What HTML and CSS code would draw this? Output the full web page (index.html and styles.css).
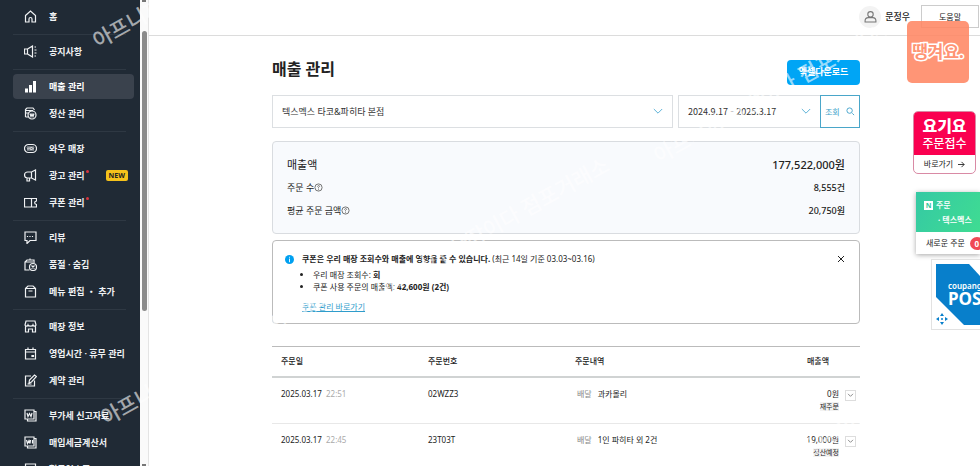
FILE: index.html
```html
<!DOCTYPE html>
<html lang="ko">
<head>
<meta charset="utf-8">
<meta name="viewport" content="width=device-width, initial-scale=1">
<title>매출 관리</title>
<link rel="stylesheet" href="styles.css">
</head>
<body>
<div class="app">
  <nav class="sidebar">
    <a class="item" href="#"><svg viewBox="0 0 26 26"><path d="M3 11 13 2l10 9v13h-7v-6a3 3 0 0 0-6 0v6H3z"/></svg>홈</a>
    <hr>
    <a class="item" href="#"><svg viewBox="0 0 26 26"><path d="M1 8h6v10H1zM7 8l10-6v22L7 18M21 4h3M21 10h4M21 16h4M21 22h3"/></svg>공지사항</a>
    <hr>
    <a class="item active" href="#"><svg viewBox="0 0 26 26"><path class="solid" d="M2 17h6v8H2zM10 10h6v15h-6zM18 2h6v23h-6z"/></svg>매출 관리</a>
    <a class="item" href="#"><svg viewBox="0 0 26 26"><path d="M3 20V5l3-3h12l3 4M3 7h15M3 12h6M3 20h5"/><circle cx="16" cy="16" r="8"/><path d="m12 13 2 6 2-5 2 5 2-6"/></svg>정산 관리</a>
    <hr>
    <a class="item" href="#"><svg viewBox="0 0 26 26"><rect x="1" y="5" width="24" height="16" rx="8"/><path d="M6 10h14M6 16h14M6 11l2 4 2-4 2 4M13 11h3v4h-3zM17 11l1 4 2-4" stroke-width="1.4"/></svg>와우 매장</a>
    <a class="item" href="#"><svg viewBox="0 0 26 26"><path d="M15 6H7a6 6 0 0 0 0 12h8l8 4V2zM15 6v12M6 18v6h5v-6"/></svg>광고 관리<i class="dot"></i><span class="new">NEW</span></a>
    <a class="item" href="#"><svg viewBox="0 0 26 26"><path d="M1 5h24v5c-5 1-5 6 0 7v5H1zM15 5v17"/></svg>쿠폰 관리<i class="dot"></i></a>
    <hr>
    <a class="item" href="#"><svg viewBox="0 0 26 26"><path d="M2 2h22v17H12l-6 6v-6H2zM7 10v2M12 10v2M17 10v2"/></svg>리뷰</a>
    <a class="item" href="#"><svg viewBox="0 0 26 26"><path d="M11 24H2V8l4-4h14v6M2 8h16M12 4V1"/><circle cx="18" cy="18" r="7"/><path d="m15 15 6 6M21 15l-6 6"/></svg>품절 · 숨김</a>
    <a class="item" href="#"><svg viewBox="0 0 26 26"><path d="M3 7h20v17H3zM3 7l5-5h10l5 5M9 12h8"/></svg>메뉴 편집 ・ 추가</a>
    <hr>
    <a class="item" href="#"><svg viewBox="0 0 26 26"><path d="M4 2h18l2 8c-1 3-5 3-6 0-1 3-9 3-10 0-1 3-5 3-6 0zM3 13v11h6v-6h8v6h6V13"/></svg>매장 정보</a>
    <a class="item" href="#"><svg viewBox="0 0 26 26"><path d="M3 5h20v19H3zM3 10h20M8 1v5M18 1v5M16 17h3v2h-3z"/></svg>영업시간 · 휴무 관리</a>
    <a class="item" href="#"><svg viewBox="0 0 26 26"><path d="M14 4H3v20h18V13M10 18l1-6L21 2l4 3-10 11zM7 20h8"/></svg>계약 관리</a>
    <hr>
    <a class="item" href="#"><svg viewBox="0 0 26 26"><path d="M2 2h18v18H2zM20 5h4v19H7v-4M6 8l2 7 3-6 3 6 2-7"/></svg>부가세 신고자료</a>
    <a class="item" href="#"><svg viewBox="0 0 26 26"><path d="M2 2h18v18H2zM20 5h4v19H7v-4M5 8l2 7 3-6 2 6 1-7M17 8v7"/></svg>매입세금계산서</a>
    <a class="item" href="#"><svg viewBox="0 0 26 26"><path d="M3 2h20v22H3z"/></svg>현금영수증</a>
  </nav>
  <div class="scrollbar"><i></i><div class="thumb"></div><i></i></div>
  <div class="page">
    <header class="topbar">
      <span class="avatar"><svg viewBox="0 0 24 24"><circle cx="12" cy="8" r="5"/><path d="M2 22v-2c0-4 3-6 6-6h8c3 0 6 2 6 6v2z"/></svg></span>
      <span class="user">문정우</span>
      <button class="help">도움말</button>
    </header>
    <main>
      <div class="heading">
        <h1>매출 관리</h1>
        <button class="excel">엑셀다운로드</button>
      </div>
      <form class="filters">
        <label class="pick store"><select aria-label="매장"><option>텍스멕스 타코&amp;파히타 본점</option></select><svg viewBox="0 0 12 8"><path d="m1 1 5 5 5-5"/></svg></label>
        <label class="pick period"><select aria-label="조회 기간"><option>2024.9.17 - 2025.3.17</option></select><svg viewBox="0 0 12 8"><path d="m1 1 5 5 5-5"/></svg></label>
        <button class="search" type="button">조회<svg viewBox="0 0 10 10"><circle cx="4" cy="4" r="3"/><path d="m7 7 2 2"/></svg></button>
      </form>
      <section class="summary">
        <div class="line total"><span>매출액</span><strong>177,522,000원</strong></div>
        <div class="line"><span>주문 수<svg viewBox="0 0 10 10"><circle cx="5" cy="5" r="4"/><path d="M4 4c0-2 3-1 2 0L5 5v1M5 7v1"/></svg></span><strong>8,555건</strong></div>
        <div class="line"><span>평균 주문 금액<svg viewBox="0 0 10 10"><circle cx="5" cy="5" r="4"/><path d="M4 4c0-2 3-1 2 0L5 5v1M5 7v1"/></svg></span><strong>20,750원</strong></div>
      </section>
      <section class="notice">
        <svg class="info" viewBox="0 0 10 10"><circle cx="5" cy="5" r="5"/><path d="M5 2v1M5 4v4"/></svg>
        <div class="message">
          <p><b>쿠폰은 우리 매장 조회수와 매출에 영향을 줄 수 있습니다.</b> (최근 14일 기준 03.03~03.16)</p>
          <ul>
            <li>우리 매장 조회수: <b>회</b></li>
            <li>쿠폰 사용 주문의 매출액: <b>42,600원 (2건)</b></li>
          </ul>
          <a href="#">쿠폰 관리 바로가기</a>
        </div>
        <button class="close" aria-label="닫기"><svg viewBox="0 0 8 8"><path d="m1 1 6 6M7 1 1 7"/></svg></button>
      </section>
      <table class="orders">
        <thead><tr><th class="c1">주문일</th><th class="c2">주문번호</th><th class="c3">주문내역</th><th class="c4">매출액</th></tr></thead>
        <tbody>
          <tr><td>2025.03.17 <span class="time">22:51</span></td><td>02WZZ3</td><td><span class="kind">배달</span>과카몰리</td>
            <td><div class="amount"><div>0원<br><span class="tag">재주문</span></div><button class="expand" aria-label="펼치기"><svg viewBox="0 0 8 6"><path d="m1 1 3 3 3-3"/></svg></button></div></td></tr>
          <tr><td>2025.03.17 <span class="time">22:45</span></td><td>23T03T</td><td><span class="kind">배달</span>1인 파히타 외 2건</td>
            <td><div class="amount"><div>19,000원<br><span class="tag">정산예정</span></div><button class="expand" aria-label="펼치기"><svg viewBox="0 0 8 6"><path d="m1 1 3 3 3-3"/></svg></button></div></td></tr>
        </tbody>
      </table>
    </main>
  </div>
  <div class="mark m1">아프니까 사장이다 점포거래소</div>
  <div class="mark m2">아프니까 사장이다 점포거래소</div>
  <div class="mark m3">아프니까 사장이다 점포거래소</div>
  <div class="mark m4">아프니까 사장이다 점포거래소</div>
  <div class="mark m5">아프니까 사장이다 점포거래소</div>
  <a class="widget ddang" href="#">땡겨요.</a>
  <a class="widget yogiyo" href="#"><span class="top"><b>요기요</b><span>주문접수</span></span><span class="go">바로가기 <svg viewBox="0 0 8 8"><path d="M0 4h7M4 1l3 3-3 3"/></svg></span></a>
  <a class="widget naver" href="#"><span class="top"><span class="brand"><i>N</i>주문</span><span class="shop">· 텍스멕스</span></span><span class="fresh">새로운 주문<em>0</em></span></a>
  <a class="widget coupang" href="#"><span class="pos"><small>coupang</small><b>POS</b></span><svg class="move" viewBox="0 0 12 12"><path d="m6 0 2 3H4zM6 12l2-3H4zM0 6l3-2v4zM12 6 9 4v4z"/><circle cx="6" cy="6" r="1"/></svg></a>
</div>
</body>
</html>
```
FILE: styles.css
```css
* { box-sizing: border-box; }
body {
  margin: 0;
  font: 8px/12px "Noto Sans", "Noto Sans CJK KR", sans-serif;
  color: #222;
  background: #fff;
}
a { color: inherit; text-decoration: none; }
button, select { font: inherit; color: inherit; background: none; border: 0; padding: 0; }
svg { fill: none; stroke: currentColor; flex: none; }
.app { position: relative; display: flex; height: 100vh; overflow: hidden; }

.sidebar {
  width: 140px;
  flex: none;
  display: flex;
  flex-direction: column;
  gap: 2px;
  padding: 4px 6px 0 13px;
  overflow: hidden;
  background: #202a35;
  color: #f0f2f4;
}
.item {
  flex: none;
  display: flex;
  align-items: center;
  height: 25px;
  padding: 0 6px 0 11px;
  border-radius: 4px;
  font-size: 9px;
  font-weight: 600;
  white-space: nowrap;
}
.item svg { width: 13px; height: 13px; margin-right: 12px; stroke-width: 2.4; }
.item .solid { fill: #fff; stroke: none; }
.item.active { background: #3a424d; font-weight: 700; color: #fff; }
.sidebar hr { flex: none; width: 113px; height: 1px; margin: 3px 0 2px; border: 0; background: #2e3843; }
.dot { width: 3px; height: 3px; margin: 0 0 9px 2px; border-radius: 50%; background: #d8353f; }
.new {
  margin-left: auto;
  padding: 0 3px;
  border-radius: 2px;
  background: #f5c21b;
  color: #222;
  font-size: 7px;
  line-height: 11px;
  font-weight: 700;
}

.scrollbar {
  display: flex;
  flex-direction: column;
  align-items: center;
  justify-content: space-between;
  width: 9px;
  flex: none;
  background: #fafafa;
  border-right: 1px solid #e4e4e4;
}
.scrollbar i { width: 4px; height: 2px; background: #777; }
.thumb { width: 5px; height: 60%; margin-bottom: 124px; border-radius: 3px; background: #8b8b8b; }

.page { flex: 1; min-width: 0; }
.topbar {
  display: flex;
  align-items: center;
  justify-content: flex-end;
  height: 36px;
  padding: 0 1px 2px 0;
  border-bottom: 1px solid #dcdcdc;
}
.avatar { display: flex; align-items: center; justify-content: center; width: 22px; height: 22px; border-radius: 50%; background: #f3f3f3; color: #777; }
.avatar svg { width: 13px; height: 13px; stroke-width: 2; }
.user { margin: 0 11px 0 4px; font-size: 9px; font-weight: 500; }
.help { width: 58px; height: 23px; border: 1px solid #ccc; }

main { padding: 19px 120px 0 123px; }
.heading { display: flex; justify-content: space-between; align-items: center; margin-bottom: 10px; padding-top: 4px; }
h1 { margin: 0 0 6px; font-size: 16px; line-height: 20px; font-weight: 700; }
.excel { width: 73px; height: 25px; border-radius: 4px; background: #00a5f5; color: #fff; font-size: 9px; font-weight: 700; }

.filters { display: flex; height: 33px; }
.pick { display: flex; align-items: center; min-width: 0; border: 1px solid #dcdfe2; padding: 0 9px; color: #3fa3cf; }
.pick select { flex: 1; min-width: 0; appearance: none; color: #333; font-size: 9px; }
.pick svg { width: 10px; height: 7px; }
.store { flex: 1; margin-right: 5px; }
.period { width: 142px; border-right: 0; }
.period select { font-family: "Noto Sans CJK KR", sans-serif; }
.search { display: flex; align-items: center; justify-content: space-between; width: 40px; padding: 0 4px; border: 1px solid #4aa6c9; color: #3b9fc9; }
.search svg { width: 9px; height: 9px; }

.summary { margin-top: 13px; padding: 11px 14px; border: 1px solid #d9dce0; border-radius: 4px; background: #f8fafd; }
.line { display: flex; justify-content: space-between; align-items: center; height: 23px; font-size: 9px; }
.line > span { display: flex; align-items: center; }
.line strong { font-weight: 500; }
.line svg { width: 9px; height: 9px; color: #666; stroke-width: 1; }
.total { font-size: 11px; }
.total strong { font-size: 11px; }

.notice { display: flex; align-items: flex-start; margin-top: 6px; padding: 12px 14px 10px 12px; border: 1px solid #bbb; border-radius: 4px; }
.info { width: 9px; height: 9px; margin-top: 2px; fill: #00a0f0; stroke: none; }
.info path { stroke: #fff; }
.message { flex: 1; margin-left: 8px; }
.message p { margin: 0 0 4px; }
.message ul { margin: 0 0 8px; padding-left: 11px; }
.message a { color: #2f9ccb; text-decoration: underline; }
.close { width: 8px; height: 14px; }
.close svg { width: 8px; height: 8px; color: #222; }

.orders { width: 100%; margin-top: 22px; border-collapse: collapse; table-layout: fixed; border-top: 1px solid #bbb; }
.orders th { height: 30px; padding: 0 0 0 9px; text-align: left; font-weight: 500; border-bottom: 2px solid #d0d3d3; }
.orders td { height: 47px; padding: 10px 0 0 9px; vertical-align: top; border-bottom: 1px solid #e8e8e8; }
.orders .c1, .orders .c2 { width: 25%; }
.orders .c4 { width: 12%; padding-right: 31px; text-align: right; }
.time { margin-left: 2px; color: #aaa; }
.kind { margin: 0 6px 0 2px; color: #888; }
.amount { display: flex; justify-content: flex-end; gap: 6px; padding-right: 4px; text-align: right; white-space: nowrap; }
.tag { background: #f2f2f2; font-size: 7px; }
.expand { width: 11px; height: 11px; margin-top: 2px; border: 1px solid #ddd; display: flex; align-items: center; justify-content: center; color: #777; }
.expand svg { width: 7px; height: 5px; }

.mark {
  position: absolute;
  z-index: 1;
  color: rgba(255, 255, 255, 0.6);
  font-size: 21px;
  line-height: 24px;
  font-weight: 500;
  white-space: nowrap;
  transform: rotate(-29deg);
  transform-origin: 0 50%;
  pointer-events: none;
}
.m1 { left: 94px; top: 30px; }
.m2 { left: 102px; top: 407px; }
.m3 { left: 378px; top: 278px; }
.m4 { left: 655px; top: 145px; }
.m5 { left: 655px; top: 521px; }

.widget { position: absolute; z-index: 2; display: flex; flex-direction: column; }
.ddang {
  right: 11px; top: 21px;
  width: 62px; height: 62px;
  align-items: center; justify-content: center;
  border-radius: 5px;
  background: rgba(255, 134, 99, 0.88);
  color: #ff9474;
  font-size: 17px;
  font-weight: 700;
  -webkit-text-stroke: 3px #fff;
  paint-order: stroke fill;
}
.yogiyo { right: 4px; top: 111px; width: 63px; border: 1px solid #d98aa5; border-radius: 5px; overflow: hidden; background: #fff; }
.yogiyo .top { display: flex; flex-direction: column; align-items: center; padding: 5px 0 2px; background: #fa0050; color: #fff; font-size: 12px; line-height: 18px; font-weight: 500; }
.yogiyo b { font-size: 16px; font-weight: 900; }
.go { display: flex; align-items: center; justify-content: center; gap: 5px; height: 18px; }
.go svg { width: 7px; height: 7px; stroke: #222; }
.naver { right: 0; top: 192px; width: 64px; background: #fff; box-shadow: 0 1px 5px rgba(0, 0, 0, 0.35); }
.naver .top { height: 40px; padding: 7px 8px; background: linear-gradient(120deg, #35c9a4, #3fdc92); color: #fff; font-weight: 500; }
.brand { display: flex; align-items: center; gap: 3px; }
.brand i { width: 9px; background: #fff; color: #2fc69c; font: 700 7px/9px "Noto Sans", sans-serif; text-align: center; }
.shop { display: block; margin: 3px 0 0 14px; font-weight: 700; white-space: nowrap; }
.fresh { display: flex; align-items: center; gap: 5px; height: 22px; padding-left: 10px; white-space: nowrap; }
.fresh em { flex: none; width: 14px; border-radius: 50%; background: #f04a55; color: #fff; font: 700 8px/13px "Noto Sans", sans-serif; text-align: center; }
.coupang { right: 0; top: 259px; width: 49px; padding: 4px 0 4px 4px; border: 1px solid #e2e2e2; border-right: 0; background: #fff; overflow: hidden; }
.pos { display: flex; flex-direction: column; height: 61px; padding: 16px 0 0 12px; background: #087fcb; color: #fff; clip-path: polygon(0 0, 33px 0, 100% 12px, 100% 100%, 28px 100%, 0 33px); }
.pos small { font: 600 8px/11px "Noto Sans", sans-serif; }
.pos b { font: 700 17px/16px "Noto Sans", sans-serif; }
.move { position: absolute; left: 4px; bottom: 4px; width: 12px; height: 12px; fill: #087fcb; stroke: none; }
```
